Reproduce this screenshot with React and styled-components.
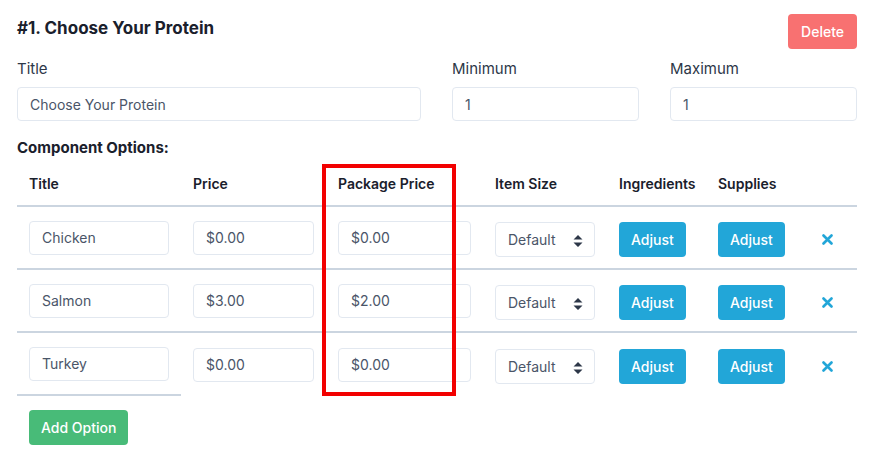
import React from 'react'
import styled, { createGlobalStyle } from 'styled-components'

const GlobalStyle = createGlobalStyle`
  body {
    margin: 0;
    background: #fff;
    font-family: Inter, "Noto Sans", sans-serif;
    color: #1a202c;
  }
`

const Page = styled.div`
  position: relative;
  padding: 14px 27px 0 17px;
`

const TopBar = styled.div`
  display: flex;
  justify-content: space-between;
  align-items: flex-start;
`

const Heading = styled.h2`
  margin: 4px 0 0;
  font-size: 17px;
  font-weight: 700;
  color: #1a202c;
`

const Button = styled.button`
  border: none;
  border-radius: 4px;
  height: 35px;
  margin-top: ${(p) => p.$mt || 0}px;
  padding: 0 ${(p) => p.$px || 13}px;
  font-family: inherit;
  font-size: 14px;
  font-weight: 500;
  color: #fff;
  background: ${(p) => p.$color};
  cursor: pointer;
`

const Fields = styled.div`
  display: grid;
  grid-template-columns: 404px 187px 187px;
  column-gap: 31px;
  margin-top: 10px;
`

const Field = styled.label`
  display: flex;
  flex-direction: column;
  gap: 9px;
  font-size: 15px;
  color: #2d3748;
`

const Input = styled.input`
  box-sizing: border-box;
  width: 100%;
  height: 34px;
  border: 1px solid #e2e8f0;
  border-radius: 4px;
  padding: 0 12px;
  font-family: inherit;
  font-size: 14px;
  color: #4a5568;
  background: #fff;
  outline: none;
`

const SubHeading = styled.h3`
  margin: 17px 0 0;
  font-size: 15px;
  font-weight: 700;
  color: #1a202c;
`

const Table = styled.div`
  margin-top: 4px;
`

const Row = styled.div`
  display: grid;
  grid-template-columns: 164px 145px 157px 124px 99px 92px 59px;
  align-items: center;
  height: ${(p) => (p.$head ? 46 : 63)}px;
  border-bottom: 2px solid #cbd5e0;
  box-sizing: border-box;
  &:last-child {
    border-bottom: none;
  }
`

const HeadCell = styled.div`
  padding: 0 12px;
  font-size: 14px;
  font-weight: 600;
  color: #1a202c;
`

const Cell = styled.div`
  padding: 0 12px;
  display: flex;
  align-items: center;
  height: 100%;
  box-sizing: border-box;
  border-bottom: ${(p) => (p.$lined ? '2px solid #cbd5e0' : 'none')};
`

const SelectBox = styled.div`
  position: relative;
  box-sizing: border-box;
  width: 100%;
  height: 35px;
  margin-top: 4px;
  border: 1px solid #e2e8f0;
  border-radius: 4px;
  padding: 0 12px;
  display: flex;
  align-items: center;
  font-size: 14px;
  color: #4a5568;
  svg {
    position: absolute;
    right: 11px;
    top: 12px;
  }
`

const RemoveButton = styled.button`
  border: none;
  background: none;
  padding: 0;
  margin: 4px 0 0 12px;
  display: flex;
  cursor: pointer;
`

const Footer = styled.div`
  padding: 14px 12px 0;
`

const Highlight = styled.div`
  position: absolute;
  left: 322px;
  top: 164px;
  width: 134px;
  height: 232px;
  box-sizing: border-box;
  border: 4px solid #f20000;
  pointer-events: none;
`

const options = [
  { title: 'Chicken', price: '$0.00', pkg: '$0.00' },
  { title: 'Salmon', price: '$3.00', pkg: '$2.00' },
  { title: 'Turkey', price: '$0.00', pkg: '$0.00' },
]

const SortArrows = () => (
  <svg width="10" height="12" viewBox="0 0 10 12">
    <path d="M5 0 L9.5 4.5 H0.5 Z M5 12 L9.5 7.5 H0.5 Z" fill="#2d3748" />
  </svg>
)

const Cross = () => (
  <svg width="11" height="11" viewBox="0 0 11 11">
    <path d="M1.5 1.5 L9.5 9.5 M9.5 1.5 L1.5 9.5" stroke="#22a6d8" strokeWidth="2.6" strokeLinecap="round" />
  </svg>
)

export default function App() {
  return (
    <Page>
      <GlobalStyle />
      <TopBar>
        <Heading>#1. Choose Your Protein</Heading>
        <Button $color="#f87171">Delete</Button>
      </TopBar>

      <Fields>
        <Field>
          Title
          <Input defaultValue="Choose Your Protein" />
        </Field>
        <Field>
          Minimum
          <Input defaultValue="1" />
        </Field>
        <Field>
          Maximum
          <Input defaultValue="1" />
        </Field>
      </Fields>

      <SubHeading>Component Options:</SubHeading>
      <Table>
        <Row $head>
          <HeadCell>Title</HeadCell>
          <HeadCell>Price</HeadCell>
          <HeadCell>Package Price</HeadCell>
          <HeadCell>Item Size</HeadCell>
          <HeadCell>Ingredients</HeadCell>
          <HeadCell>Supplies</HeadCell>
          <HeadCell />
        </Row>
        {options.map((o, i) => (
          <Row key={o.title}>
            <Cell $lined={i === options.length - 1}>
              <Input defaultValue={o.title} />
            </Cell>
            <Cell>
              <Input defaultValue={o.price} />
            </Cell>
            <Cell>
              <Input defaultValue={o.pkg} />
            </Cell>
            <Cell>
              <SelectBox>
                Default
                <SortArrows />
              </SelectBox>
            </Cell>
            <Cell>
              <Button $color="#22a6d8" $mt={4} $px={12}>Adjust</Button>
            </Cell>
            <Cell>
              <Button $color="#22a6d8" $mt={4} $px={12}>Adjust</Button>
            </Cell>
            <Cell>
              <RemoveButton aria-label="Remove option">
                <Cross />
              </RemoveButton>
            </Cell>
          </Row>
        ))}
      </Table>

      <Footer>
        <Button $color="#48bb78" $px={12}>Add Option</Button>
      </Footer>

      <Highlight />
    </Page>
  )
}
